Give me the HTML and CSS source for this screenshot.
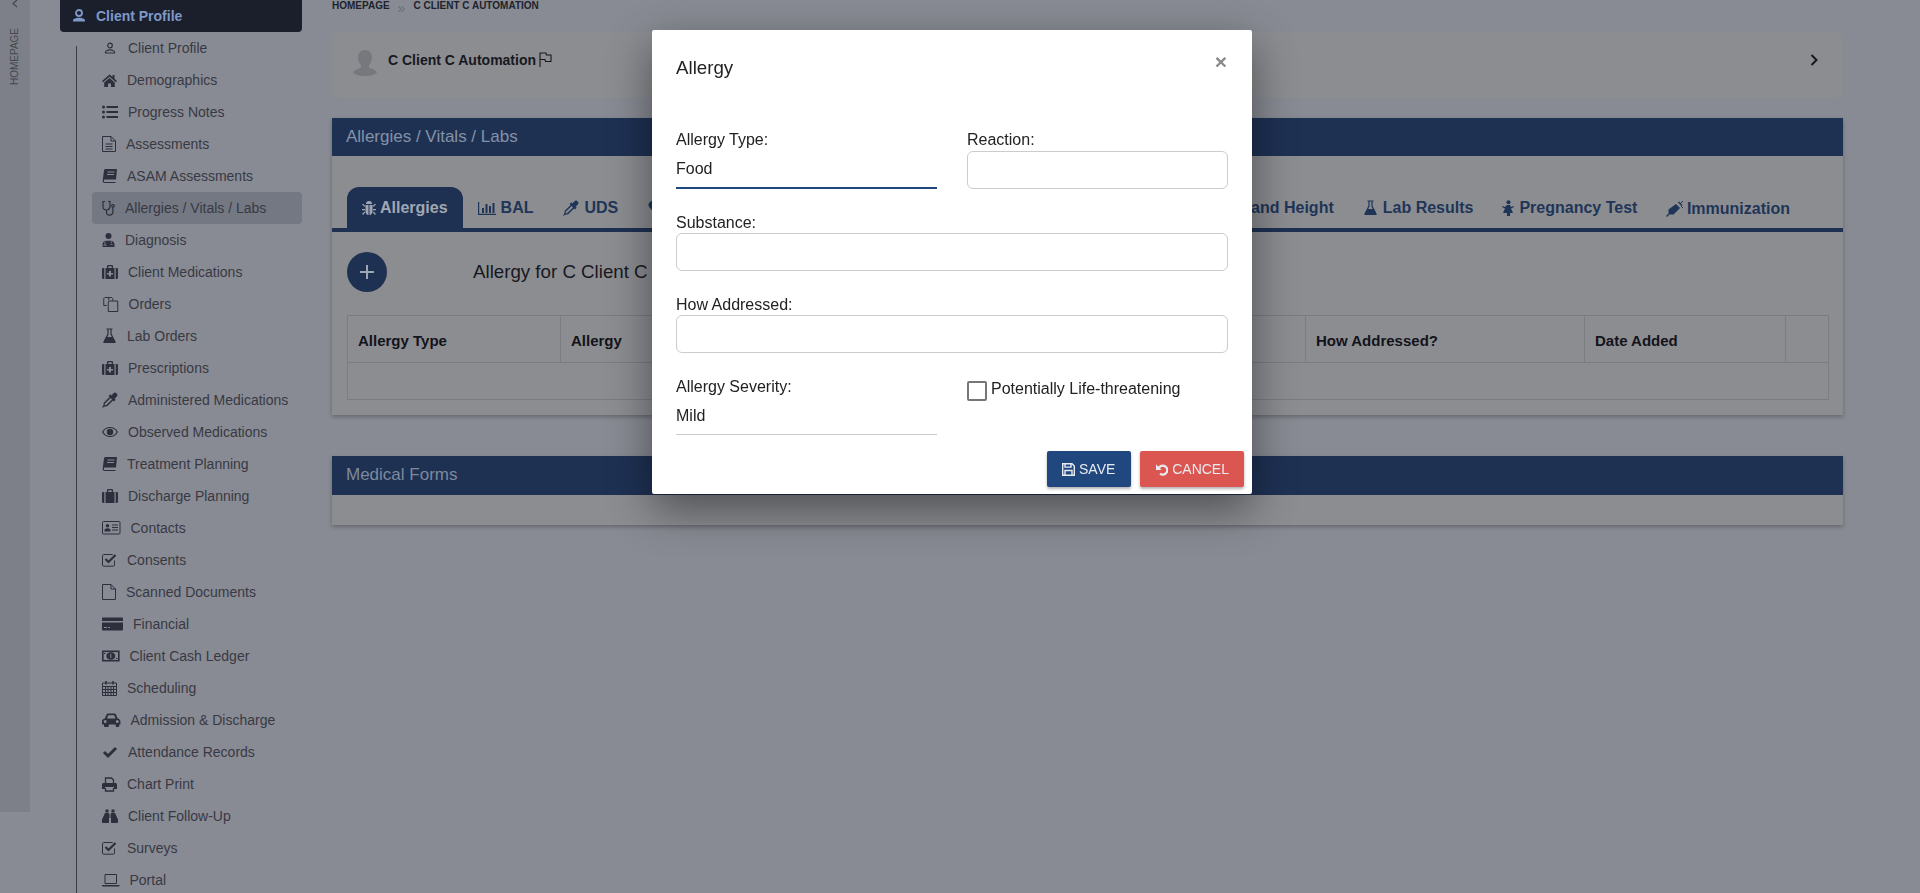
FILE: index.html
```html
<!DOCTYPE html>
<html lang="en">
<head>
<meta charset="utf-8">
<title>Allergies / Vitals / Labs</title>
<link rel="stylesheet" href="styles.css">
</head>
<body>
<div class="app">
  <aside class="rail">
    <svg class="rail-chevron" width="8" height="10" viewBox="0 0 8 10"><path d="M6 0 2 3.500 6 7" fill="none" stroke="currentColor" stroke-width="1.200"/></svg>
    <span class="rail-label">HOMEPAGE</span>
  </aside>

  <nav class="sidebar">
    <div class="side-head">
      <svg width="14" height="16" viewBox="0 0 14 16"><circle cx="7" cy="5" r="3" fill="none" stroke="currentColor" stroke-width="1.800"/><path d="M1 13.500v-1c0-1.800 3-2.800 6-2.800s6 1 6 2.800v1z" fill="currentColor"/></svg>
      <span>Client Profile</span>
    </div>
    <ul class="side-list">
      <li class="side-item"><svg width="16" height="16" viewBox="0 0 16 16"><g fill="none" stroke="currentColor" stroke-width="1.200"><circle cx="8" cy="5.500" r="2.300"/><path d="M3.500 13v-.8c0-1.400 2.500-2.300 4.500-2.300s4.500.9 4.500 2.300v.8z"/></g></svg><span>Client Profile</span></li>
      <li class="side-item"><svg width="15" height="16" viewBox="0 0 15 16"><path fill="currentColor" d="M7.500 2.500 0 9l1 1.200L7.500 4.700 14 10.200 15 9l-2.500-2.200V3h-2v2.100zM2.200 10.500V15H6v-3.500h3V15h3.800v-4.500L7.500 6z"/></svg><span>Demographics</span></li>
      <li class="side-item"><svg width="16" height="16" viewBox="0 0 16 16"><g fill="currentColor"><circle cx="1.500" cy="3" r="1.500"/><circle cx="1.500" cy="8" r="1.500"/><circle cx="1.500" cy="13" r="1.500"/><rect x="4.500" y="2" width="11.500" height="2"/><rect x="4.500" y="7" width="11.500" height="2"/><rect x="4.500" y="12" width="11.500" height="2"/></g></svg><span>Progress Notes</span></li>
      <li class="side-item"><svg width="14" height="16" viewBox="0 0 14 16"><path fill="none" stroke="currentColor" d="M.5.5h8.500l4.500 4.500v10.500H.5zM9 .5V5h4.500M3.500 8h7M3.500 10.500h7M3.500 13h7"/></svg><span>Assessments</span></li>
      <li class="side-item"><svg width="15" height="16" viewBox="0 0 15 16"><path fill="currentColor" d="M3.500 1H15l-1 10.500H3.200c-1 0-1.400.5-1.400 1.300s.5 1.200 1.400 1.200h10.300l-.2 1H2.800C1.300 15 .5 14 .7 12.600L2 2.500C2.100 1.600 2.700 1 3.500 1z"/><path stroke="#888b93" d="M5.500 4h7M5 6.500h7"/></svg><span>ASAM Assessments</span></li>
      <li class="side-item side-item-active"><svg width="13" height="16" viewBox="0 0 13 16"><g fill="none" stroke="currentColor" stroke-width="1.200"><path d="M3 1.500H1v5a3.500 3.500 0 0 0 7 0v-5H6"/><path d="M4.500 10v2a3.200 3.200 0 0 0 6.400 0V7.500"/><circle cx="11" cy="5.800" r="1.300"/></g></svg><span>Allergies / Vitals / Labs</span></li>
      <li class="side-item"><svg width="13" height="16" viewBox="0 0 13 16"><circle cx="6.500" cy="4" r="3" fill="currentColor"/><path fill="currentColor" d="M.5 15v-2.500c0-2.200 1.800-3.800 3.800-3.800h4.400c2 0 3.800 1.600 3.800 3.800V15z"/><path fill="none" stroke="#888b93" stroke-width=".8" d="M3 9.500v2.500M9.500 9.500V11M2 14v-1.200h2V14M8.500 12.500h2"/></svg><span>Diagnosis</span></li>
      <li class="side-item"><svg width="16" height="16" viewBox="0 0 16 16"><path fill="currentColor" fill-rule="evenodd" d="M5 4V2.200C5 1.500 5.500 1 6.200 1h3.600c.7 0 1.200.5 1.200 1.200V4H9.700V2.300H6.300V4zM3.500 4h9v11h-9zM7 7v2H5v1.600h2v2h2v-2h2V9H9V7zM0 5.200C0 4.500.5 4 1.200 4h1.100v11H1.200C.5 15 0 14.500 0 13.800zM16 5.200c0-.7-.5-1.200-1.200-1.200h-1.100v11h1.100c.7 0 1.200-.5 1.200-1.200z"/></svg><span>Client Medications</span></li>
      <li class="side-item"><svg width="16.500" height="16" viewBox="0 0 16 16"><path fill="none" stroke="currentColor" d="M4.500 9.500h-3v-7l1-1h4v3M6.500 1.500h3l1 1v2M6 15.500V6l1-1h8.500v10.500z"/></svg><span>Orders</span></li>
      <li class="side-item"><svg width="15" height="16" viewBox="0 0 15 16"><path fill="none" stroke="currentColor" stroke-width="1.200" d="M4.500 1h6M6 1v5l-4 8M9 1v5l4 8"/><path fill="currentColor" d="M4.200 9h6.600l2.800 5.200c.3.500 0 .8-.6.800H2c-.6 0-.9-.3-.6-.8z"/></svg><span>Lab Orders</span></li>
      <li class="side-item"><svg width="16" height="16" viewBox="0 0 16 16"><path fill="currentColor" fill-rule="evenodd" d="M5 4V2.200C5 1.500 5.500 1 6.200 1h3.600c.7 0 1.200.5 1.200 1.200V4H9.700V2.300H6.300V4zM3.500 4h9v11h-9zM7 7v2H5v1.600h2v2h2v-2h2V9H9V7zM0 5.200C0 4.500.5 4 1.200 4h1.100v11H1.200C.5 15 0 14.500 0 13.800zM16 5.200c0-.7-.5-1.200-1.200-1.200h-1.100v11h1.100c.7 0 1.200-.5 1.200-1.200z"/></svg><span>Prescriptions</span></li>
      <li class="side-item"><svg width="16" height="16" viewBox="0 0 16 16"><path fill="currentColor" fill-rule="evenodd" d="M14.600 1.400a2.300 2.300 0 0 0-3.300 0L9.300 3.400 8.200 2.300 6.600 3.900l1 1-5.900 5.900-.2 2.200L0 16l3-1.500 2.200-.2 5.900-5.900 1 1 1.600-1.600-1.100-1.100 2-2a2.300 2.300 0 0 0 0-3.300zM8.600 6 2.800 11.800l-.2 1.500 1.600-.2L10 7.400z"/></svg><span>Administered Medications</span></li>
      <li class="side-item"><svg width="16" height="16" viewBox="0 0 16 16"><path fill="none" stroke="currentColor" stroke-width="1.200" d="M8 3.500C4.500 3.500 2 5.500.7 8 2 10.500 4.500 12.500 8 12.500s6-2 7.300-4.500C14 5.500 11.500 3.500 8 3.500z"/><circle cx="8" cy="8" r="3.200" fill="currentColor"/></svg><span>Observed Medications</span></li>
      <li class="side-item"><svg width="15" height="16" viewBox="0 0 15 16"><path fill="currentColor" d="M3.500 1H15l-1 10.500H3.200c-1 0-1.400.5-1.400 1.300s.5 1.200 1.400 1.200h10.300l-.2 1H2.800C1.300 15 .5 14 .7 12.600L2 2.500C2.100 1.600 2.700 1 3.500 1z"/><path stroke="#888b93" d="M5.500 4h7M5 6.500h7"/></svg><span>Treatment Planning</span></li>
      <li class="side-item"><svg width="16" height="16" viewBox="0 0 16 16"><path fill="currentColor" d="M5 4V2.200C5 1.500 5.500 1 6.200 1h3.600c.7 0 1.200.5 1.200 1.200V4H9.700V2.300H6.300V4zM3.500 4h9v11h-9zM0 5.200C0 4.500.5 4 1.200 4h1.100v11H1.200C.5 15 0 14.500 0 13.800zM16 5.200c0-.7-.5-1.200-1.200-1.200h-1.100v11h1.100c.7 0 1.200-.5 1.200-1.200z"/></svg><span>Discharge Planning</span></li>
      <li class="side-item"><svg width="18.500" height="16" viewBox="0 0 18.500 16"><rect x=".5" y="1.500" width="17.500" height="12.500" rx="1" fill="none" stroke="currentColor"/><circle cx="5.500" cy="5.800" r="1.800" fill="currentColor"/><path fill="currentColor" d="M2.500 11.500V10c0-1 1.200-1.800 3-1.800s3 .8 3 1.800v1.500z"/><path stroke="currentColor" d="M10 5h6M10 7.500h6M10 10h6"/></svg><span>Contacts</span></li>
      <li class="side-item"><svg width="15" height="16" viewBox="0 0 15 16"><path fill="none" stroke="currentColor" d="M12.500 8.500V13c0 .8-.5 1.200-1.200 1.200H1.700C1 14.200.5 13.700.5 13V3.700c0-.7.5-1.200 1.200-1.200h9"/><path fill="none" stroke="currentColor" stroke-width="2.200" d="M3.500 7l3 3 7-7"/></svg><span>Consents</span></li>
      <li class="side-item"><svg width="14" height="16" viewBox="0 0 14 16"><path fill="none" stroke="currentColor" d="M.5.500h8.500l4.500 4.500v10.500H.5zM9 .5V5h4.500"/></svg><span>Scanned Documents</span></li>
      <li class="side-item"><svg width="21" height="16" viewBox="0 0 21 16"><path fill="currentColor" d="M0 2.500C0 2 .4 1.500 1 1.500h19c.6 0 1 .5 1 1V5H0zM0 6.500h21v7c0 .5-.4 1-1 1H1c-.6 0-1-.5-1-1z"/><path stroke="#888b93" d="M2 11.500h3M6 11.500h2"/></svg><span>Financial</span></li>
      <li class="side-item"><svg width="17.500" height="16" viewBox="0 0 17.500 16"><rect x=".8" y="3.300" width="16" height="9.400" fill="none" stroke="currentColor" stroke-width="1.600"/><ellipse cx="8.800" cy="8" rx="4.500" ry="3.800" fill="currentColor"/><path stroke="#888b93" d="M8.800 5.800v4.400"/><path stroke="currentColor" d="M2 5.500h1.500M14 10.500h1.500"/></svg><span>Client Cash Ledger</span></li>
      <li class="side-item"><svg width="15" height="16" viewBox="0 0 15 16"><path fill="none" stroke="currentColor" d="M.5 3h14v12.500H.5zM.5 6.500h14M.5 9.500h14M.5 12.500h14M3.500 6.500v9M6 6.500v9M9 6.500v9M11.500 6.500v9"/><path fill="none" stroke="currentColor" stroke-width="1.500" d="M4 1v3.500M11 1v3.500"/></svg><span>Scheduling</span></li>
      <li class="side-item"><svg width="18.500" height="16" viewBox="0 0 18.500 16"><path fill="currentColor" fill-rule="evenodd" d="M2.800 6.500l1.700-4c.2-.6.800-1 1.400-1h6.700c.6 0 1.200.4 1.400 1l1.700 4c1.500.3 2.700 1.300 2.700 3v3h-1.200V14c0 .6-.4 1-1 1h-1.500c-.6 0-1-.4-1-1v-1.500h-7V14c0 .6-.4 1-1 1H3c-.6 0-1-.4-1-1v-1.500H0v-3c0-1.700 1.300-2.700 2.800-3zM5 6.500h8.500l-1.300-3.200H6.300zM3.200 8a1.500 1.500 0 1 0 0 3 1.500 1.500 0 0 0 0-3zM15.300 8a1.500 1.500 0 1 0 0 3 1.500 1.500 0 0 0 0-3z"/></svg><span>Admission &amp; Discharge</span></li>
      <li class="side-item"><svg width="16" height="16" viewBox="0 0 16 16"><path fill="none" stroke="currentColor" stroke-width="3" d="M2 8l4 4 8-8"/></svg><span>Attendance Records</span></li>
      <li class="side-item"><svg width="15" height="16" viewBox="0 0 15 16"><path fill="none" stroke="currentColor" stroke-width="1.300" d="M3.500 7V2h6l2 2v3M3.500 12v3h8v-3"/><path fill="currentColor" d="M1.500 7h12c.8 0 1.500.7 1.500 1.500V13h-3v-2H3v2H0V8.500C0 7.700.7 7 1.500 7z"/></svg><span>Chart Print</span></li>
      <li class="side-item"><svg width="16" height="16" viewBox="0 0 16 16"><path fill="currentColor" d="M3.500 1.500h3v3h-3zM9.500 1.500h3v3h-3zM3 5h4v9c0 .6-.4 1-1 1H1c-.6 0-1-.4-1-1v-2.500zM13 5H9v9c0 .6.4 1 1 1h5c.6 0 1-.4 1-1v-2.500zM7.500 6h1v4h-1z"/></svg><span>Client Follow-Up</span></li>
      <li class="side-item"><svg width="15" height="16" viewBox="0 0 15 16"><path fill="none" stroke="currentColor" d="M12.500 8.500V13c0 .8-.5 1.200-1.200 1.200H1.700C1 14.200.5 13.700.5 13V3.700c0-.7.5-1.200 1.200-1.200h9"/><path fill="none" stroke="currentColor" stroke-width="2.200" d="M3.500 7l3 3 7-7"/></svg><span>Surveys</span></li>
      <li class="side-item"><svg width="17.500" height="16" viewBox="0 0 17.500 16"><path fill="none" stroke="currentColor" d="M3 2.500h11.500v9H3z"/><path fill="currentColor" d="M0 13h17.500v.7c0 .5-.4.8-.8.800H.8c-.4 0-.8-.3-.8-.8z"/></svg><span>Portal</span></li>
    </ul>
  </nav>

  <main class="main">
    <div class="crumbs"><span>HOMEPAGE</span><span class="crumb-sep">&raquo;</span><span>C CLIENT C AUTOMATION</span></div>

    <section class="client-card">
      <svg class="avatar" width="24" height="26" viewBox="0 0 24 26"><path fill="currentColor" d="M12 0c4.500 0 7 3.200 7 7.500 0 3.500-1.500 6-3 7.500v2.500c2.500 1.200 7 2.500 8 5-2 2-6.500 3.500-12 3.500S2 24.500 0 22.500c1-2.500 5.500-3.800 8-5V15C6.500 13.500 5 11 5 7.500 5 3.200 7.500 0 12 0z"/></svg>
      <strong class="client-name">C Client C Automation</strong>
      <svg class="flag" width="13" height="15" viewBox="0 0 13 15"><path fill="none" stroke="currentColor" stroke-width="1.100" d="M1 15V1h6l.5 2H12v6.500H6.500L6 7.500H1"/></svg>
      <svg class="chevron" width="9" height="14" viewBox="0 0 9 14"><path fill="none" stroke="currentColor" stroke-width="2" d="M1.500 2 6.500 7l-5 5"/></svg>
    </section>

    <section class="panel panel-vitals">
      <h2 class="panel-bar">Allergies / Vitals / Labs</h2>
      <div class="tabs">
        <a class="tab tab-active"><svg width="14" height="16" viewBox="0 0 14 16"><path fill="currentColor" d="M4 4a3 3 0 0 1 6 0zM3.500 5h3v10C4.500 15 3.500 13 3.500 11zM7.500 5h3v6c0 2-1 4-3 4zM0 4.500l1-.8 2.300 2.300-.8.800zM14 4.500l-1-.8-2.300 2.300.8.800zM0 9h3v1.200H0zM11 9h3v1.200h-3zM0 14l2.500-2.500.8.800L1 15zM14 14l-2.500-2.500-.8.800L13 15z"/></svg>Allergies</a>
        <a class="tab"><svg width="18" height="16" viewBox="0 0 18 16"><path fill="none" stroke="currentColor" stroke-width="1.200" d="M.6 2v12.400H18"/><path fill="currentColor" d="M4 8h2v5H4zM7.500 4h2v9h-2zM11 6h2v7h-2zM14.500 3h2v10h-2z"/></svg>BAL</a>
        <a class="tab"><svg width="16" height="16" viewBox="0 0 16 16"><path fill="currentColor" fill-rule="evenodd" d="M14.600 1.400a2.300 2.300 0 0 0-3.300 0L9.300 3.400 8.200 2.300 6.600 3.900l1 1-5.900 5.900-.2 2.200L0 16l3-1.500 2.200-.2 5.900-5.900 1 1 1.600-1.600-1.100-1.100 2-2a2.300 2.300 0 0 0 0-3.300zM8.600 6 2.800 11.800l-.2 1.500 1.600-.2L10 7.400z"/></svg>UDS</a>
        <a class="tab"><svg width="16" height="16" viewBox="0 0 16 16"><path fill="currentColor" d="M8 14 1.500 7.500a4 4 0 0 1 6.500-5 4 4 0 0 1 6.500 5z"/></svg>Vitals</a>
        <div class="tabs-right">
          <a class="tab tab-w">Weight and Height</a>
          <a class="tab tab-lab"><svg width="15" height="16" viewBox="0 0 15 16"><path fill="none" stroke="currentColor" stroke-width="1.200" d="M4.500 1h6M6 1v5l-4 8M9 1v5l4 8"/><path fill="currentColor" d="M4.200 9h6.600l2.800 5.200c.3.500 0 .8-.6.800H2c-.6 0-.9-.3-.6-.8z"/></svg>Lab Results</a>
          <a class="tab tab-tight"><svg width="13" height="16" viewBox="0 0 13 16"><circle cx="6.500" cy="2.300" r="2" fill="currentColor"/><path fill="currentColor" d="M5 5h3l1 2 2.500-1 .5 1-3 1.500 2 4.500H8v3H5v-3H1l2-4.500L0 7l.5-1L3 7z"/></svg>Pregnancy Test</a>
          <a class="tab tab-low"><svg width="20" height="16" viewBox="0 0 20 16"><path fill="currentColor" d="M11 3l4 4-6.500 6.500H4.500L2 16l-1-1 2.500-2.500V8.500zM13 1.500l1-1 3.500 3.500-1 1z"/><path stroke="currentColor" d="M15 3l3-3M16 5l2 2"/></svg>Immunization</a>
        </div>
      </div>
      <div class="panel-tools">
        <button class="add-btn" type="button"><svg width="18" height="18" viewBox="0 0 18 18"><path stroke="currentColor" stroke-width="2" d="M9 2v14M2 9h14"/></svg></button>
        <h3 class="panel-title">Allergy for C Client C Automation</h3>
      </div>
      <table class="grid">
        <colgroup><col class="c-type"><col class="c-allergy"><col class="c-a"><col class="c-b"><col class="c-how"><col class="c-date"><col class="c-act"></colgroup>
        <thead>
          <tr><th>Allergy Type</th><th>Allergy</th><th>Severity</th><th>Reaction</th><th>How Addressed?</th><th>Date Added</th><th></th></tr>
        </thead>
        <tbody>
          <tr><td colspan="7"></td></tr>
        </tbody>
      </table>
    </section>

    <section class="panel panel-forms">
      <h2 class="panel-bar panel-bar-tall">Medical Forms</h2>
    </section>
  </main>
</div>

<div class="backdrop">
  <div class="modal">
    <header class="modal-head">
      <h3 class="modal-title">Allergy</h3>
      <span class="modal-close">&times;</span>
    </header>
    <form class="modal-form">
      <div class="field">
        <label>Allergy Type:</label>
        <select class="pick pick-focus"><option>Food</option></select>
      </div>
      <div class="field">
        <label>Reaction:</label>
        <input class="text-input" type="text">
      </div>
      <div class="field field-wide">
        <label>Substance:</label>
        <input class="text-input" type="text">
      </div>
      <div class="field field-wide">
        <label>How Addressed:</label>
        <input class="text-input" type="text">
      </div>
      <div class="field field-last">
        <label>Allergy Severity:</label>
        <select class="pick"><option>Mild</option></select>
      </div>
      <div class="check-row field-last">
        <input class="check" type="checkbox">
        <label>Potentially Life-threatening</label>
      </div>
    </form>
    <footer class="modal-foot">
      <button class="btn btn-save" type="button"><svg width="13" height="13" viewBox="0 0 13 13"><path fill="none" stroke="currentColor" stroke-width="1.400" d="M.7.700h9.300l2.300 2.300v9.300H.7zM3 .7v3.400h6V.7M3 12.300V7.500h7v4.800"/></svg>SAVE</button>
      <button class="btn btn-cancel" type="button"><svg width="13" height="13" viewBox="0 0 13 13"><path fill="none" stroke="currentColor" stroke-width="2.400" d="M2.500 6.500a4.800 4.800 0 1 1 1.800 4.500"/><path fill="currentColor" d="M0 1 6 7H0z"/></svg>CANCEL</button>
    </footer>
  </div>
</div>
</body>
</html>
```

FILE: styles.css
```css
* { box-sizing: border-box; }

html, body {
  margin: 0;
  height: 893px;
  overflow: hidden;
}

body {
  background: #888b93;
  color: #35363f;
  font-family: "Liberation Sans", Arial, sans-serif;
  font-size: 14px;
}

.app {
  display: flex;
  height: 893px;
  overflow: hidden;
}

/* left rail */
.rail {
  flex: none;
  width: 30px;
  height: 812px;
  background: #7d8089;
  color: #45474f;
  display: flex;
  flex-direction: column;
  align-items: center;
}

.rail-chevron { flex: none; margin-bottom: 18px; }

.rail-label {
  writing-mode: vertical-rl;
  transform: rotate(180deg);
  font-size: 10px;
  line-height: 12px;
  padding-left: 1px;
}

/* sidebar */
.sidebar {
  flex: none;
  width: 242px;
  margin-left: 30px;
}

.side-head {
  height: 32px;
  padding-left: 12px;
  display: flex;
  align-items: center;
  gap: 10px;
  background: #1b1e2b;
  border-radius: 0 0 4px 4px;
  color: #7d99c7;
  font-weight: bold;
}

.side-list {
  position: relative;
  list-style: none;
  margin: 0;
  padding: 0 0 0 32px;
}

.side-list::before {
  content: "";
  position: absolute;
  left: 16px;
  top: 14px;
  bottom: 0;
  width: 1px;
  background: #3c3e44;
}

.side-item {
  height: 32px;
  padding-left: 10px;
  display: flex;
  align-items: center;
  gap: 10px;
  color: #383944;
  border-radius: 4px;
}

.side-item svg { flex: none; color: #2d2f3c; }

.side-item-active { background: #747883; }

/* main column */
.main {
  flex: none;
  width: 1511px;
  margin-left: 30px;
}

.crumbs {
  height: 32px;
  display: flex;
  gap: 8px;
  font-size: 10px;
  line-height: 11px;
  font-weight: bold;
  color: #20222c;
}

.crumb-sep {
  color: #6a6d76;
  font-weight: normal;
  font-size: 14px;
  line-height: 16px;
  height: 11px;
}

.client-card {
  height: 66px;
  padding: 18px 24px 0 21px;
  display: flex;
  align-items: flex-start;
  background: #8c8d91;
  border-radius: 6px;
  color: #17181f;
}

.avatar { color: #77787d; margin-right: 11px; flex: none; }

.client-name { line-height: 20px; }

.flag { margin: 2px 0 0 3px; flex: none; }

.chevron { margin: 3px 0 0 auto; flex: none; }

.panel {
  background: #8c8d91;
  box-shadow: 0 2px 4px rgba(0, 0, 0, .25);
}

.panel-vitals { margin-top: 20px; height: 297px; }

.panel-forms { margin-top: 41px; height: 69px; }

.panel-bar {
  margin: 0;
  height: 38px;
  padding-left: 14px;
  display: flex;
  align-items: center;
  background: #1e3153;
  color: #8492a7;
  font-size: 17px;
  font-weight: normal;
}

.panel-bar-tall { height: 39px; padding-bottom: 2px; color: #7d899c; }

/* tabs */
.tabs {
  margin-top: 31px;
  height: 45px;
  padding: 0 38px 0 15px;
  display: flex;
  border-bottom: 4px solid #1e3153;
}

.tabs-right { display: flex; margin-left: auto; }

.tab {
  height: 41px;
  padding: 0 15px;
  display: flex;
  align-items: center;
  gap: 5px;
  color: #1f3558;
  font-size: 16px;
  font-weight: bold;
  white-space: nowrap;
}

.tab svg { flex: none; }

.tab-w { padding-right: 14px; }

.tab-lab { padding-right: 14px; }

.tab-tight { gap: 4px; padding-right: 12.5px; }

.tab-low { gap: 2px; padding-top: 2px; }

.tab-active {
  gap: 4px;
  background: #1e3153;
  color: #a1a7b2;
  border-radius: 12px 12px 0 0;
}

.panel-tools {
  margin-top: 20px;
  padding-left: 15px;
  display: flex;
  align-items: center;
  height: 40px;
}

.add-btn {
  flex: none;
  width: 40px;
  height: 40px;
  padding: 0;
  display: flex;
  align-items: center;
  justify-content: center;
  border: 0;
  border-radius: 50%;
  background: #1e3153;
  color: #9ea6b4;
}

.panel-title {
  margin: 0 0 0 86px;
  font-size: 18.72px;
  font-weight: normal;
  color: #17181f;
}

/* table */
.grid {
  width: 1481px;
  margin: 23px 0 0 15px;
  border-collapse: collapse;
  table-layout: fixed;
}

.c-type { width: 213px; }
.c-allergy { width: 280px; }
.c-a { width: 235px; }
.c-b { width: 230px; }
.c-how { width: 279px; }
.c-date { width: 201px; }
.c-act { width: 43px; }

.grid th,
.grid td { border: 1px solid #7b7c81; }

.grid th {
  height: 47px;
  padding: 2px 10px 0;
  text-align: left;
  font-size: 15px;
  color: #13131b;
}

.grid td { height: 37px; }

/* modal */
.backdrop {
  position: fixed;
  inset: 0;
  padding: 30px 0 0 652px;
}

.modal {
  width: 600px;
  height: 464px;
  background: #fff;
  border-radius: 2px;
  box-shadow: 0 15px 45px rgba(0, 0, 0, .45);
  color: #222;
  font-size: 16px;
}

.modal-head {
  height: 99px;
  padding: 27px 25px 0 24px;
  display: flex;
  justify-content: space-between;
  align-items: flex-start;
}

.modal-title {
  margin: 0;
  font-size: 18.72px;
  line-height: 22px;
  font-weight: normal;
}

.modal-close {
  margin-top: -7px;
  font-size: 21px;
  line-height: 24px;
  font-weight: bold;
  color: #8a8a8a;
}

.modal-form {
  padding: 0 24px;
  display: grid;
  grid-template-columns: 261px 261px;
  column-gap: 30px;
  row-gap: 22px;
}

.field { display: flex; flex-direction: column; }

.field label { height: 22px; line-height: 22px; }

.field-wide label { line-height: 24px; }

.field-wide { grid-column: 1 / -1; }

.field-last { margin-top: 1px; }

.text-input {
  height: 38px;
  width: 100%;
  border: 1px solid #cccccc;
  border-radius: 6px;
  background: #fff;
}

.pick {
  appearance: none;
  height: 37px;
  width: 100%;
  padding: 0 0 2px;
  border: 0;
  border-bottom: 1px solid #cccccc;
  border-radius: 0;
  background: transparent;
  color: #222;
  font: inherit;
}

.pick-focus {
  height: 38px;
  padding-bottom: 2px;
  border-bottom: 2px solid #21477f;
}

.check-row {
  display: flex;
  align-items: flex-start;
  gap: 4px;
}

.check-row label { line-height: 22px; margin-top: 2px; }

.check {
  appearance: none;
  flex: none;
  width: 20px;
  height: 20px;
  margin: 5px 0 0;
  border: 2px solid #767676;
  border-radius: 2px;
  background: #fff;
}

.modal-foot {
  margin-top: 16px;
  padding-right: 8px;
  display: flex;
  justify-content: flex-end;
  gap: 9px;
}

.btn {
  height: 36px;
  padding: 0 15px;
  display: flex;
  align-items: center;
  gap: 4px;
  border: 0;
  border-radius: 2px;
  color: #e8ebf0;
  font: 14px "Liberation Sans", Arial, sans-serif;
  box-shadow: 0 2px 3px rgba(0, 0, 0, .3);
}

.btn-save { width: 84px; background: #21477f; }

.btn-cancel { width: 104px; background: #dc5651; padding-left: 16px; }
```
